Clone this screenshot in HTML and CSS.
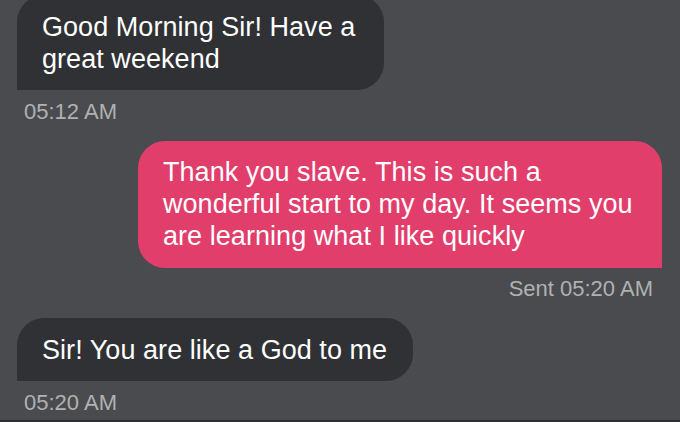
FILE: index.html
```html
<!DOCTYPE html>
<html lang="en">
<head>
<meta charset="utf-8">
<title>Messages</title>
<link rel="stylesheet" href="styles.css">
</head>
<body>
<main class="thread">
  <div class="msg msg-in">
    <p class="bubble bubble-in bubble-first">Good Morning Sir! Have a great weekend</p>
    <span class="meta">05:12 AM</span>
  </div>
  <div class="msg msg-out">
    <p class="bubble bubble-out">Thank you slave. This is such a wonderful start to my day. It seems you are learning what I like quickly</p>
    <span class="meta">Sent 05:20 AM</span>
  </div>
  <div class="msg msg-in">
    <p class="bubble bubble-in">Sir! You are like a God to me</p>
    <span class="meta">05:20 AM</span>
  </div>
</main>
<div class="edge"></div>
</body>
</html>
```
FILE: styles.css
```css
html, body {
  margin: 0;
  height: 100%;
}

body {
  background: #4a4b4e;
  font-family: "Liberation Sans", Arial, Helvetica, sans-serif;
  display: flex;
  flex-direction: column;
  overflow: hidden;
}

.thread {
  flex: 1;
  display: flex;
  flex-direction: column;
  gap: 17px;
  padding: 0 18px 0 17px;
  margin-top: -5px;
}

.msg {
  display: flex;
  flex-direction: column;
}

.msg-in {
  align-items: flex-start;
}

.msg-out {
  align-items: flex-end;
}

.bubble {
  margin: 0;
  color: #ffffff;
  font-size: 27px;
  line-height: 32px;
  letter-spacing: 0.05px;
  padding: 15.5px 26px 15.5px 25px;
  border-radius: 27px;
}

.bubble-in {
  background: #303134;
  border-bottom-left-radius: 0;
}

.bubble-first {
  width: 316px;
}

.bubble-out {
  background: #e13e6c;
  border-bottom-right-radius: 0;
  width: 477px;
  padding-right: 22px;
}

.meta {
  margin-top: 9.5px;
  color: #b0b1b3;
  font-size: 22px;
  line-height: 24px;
  padding: 0 9px 0 7px;
}

.edge {
  height: 2px;
  background: #2c2d2f;
}
```
